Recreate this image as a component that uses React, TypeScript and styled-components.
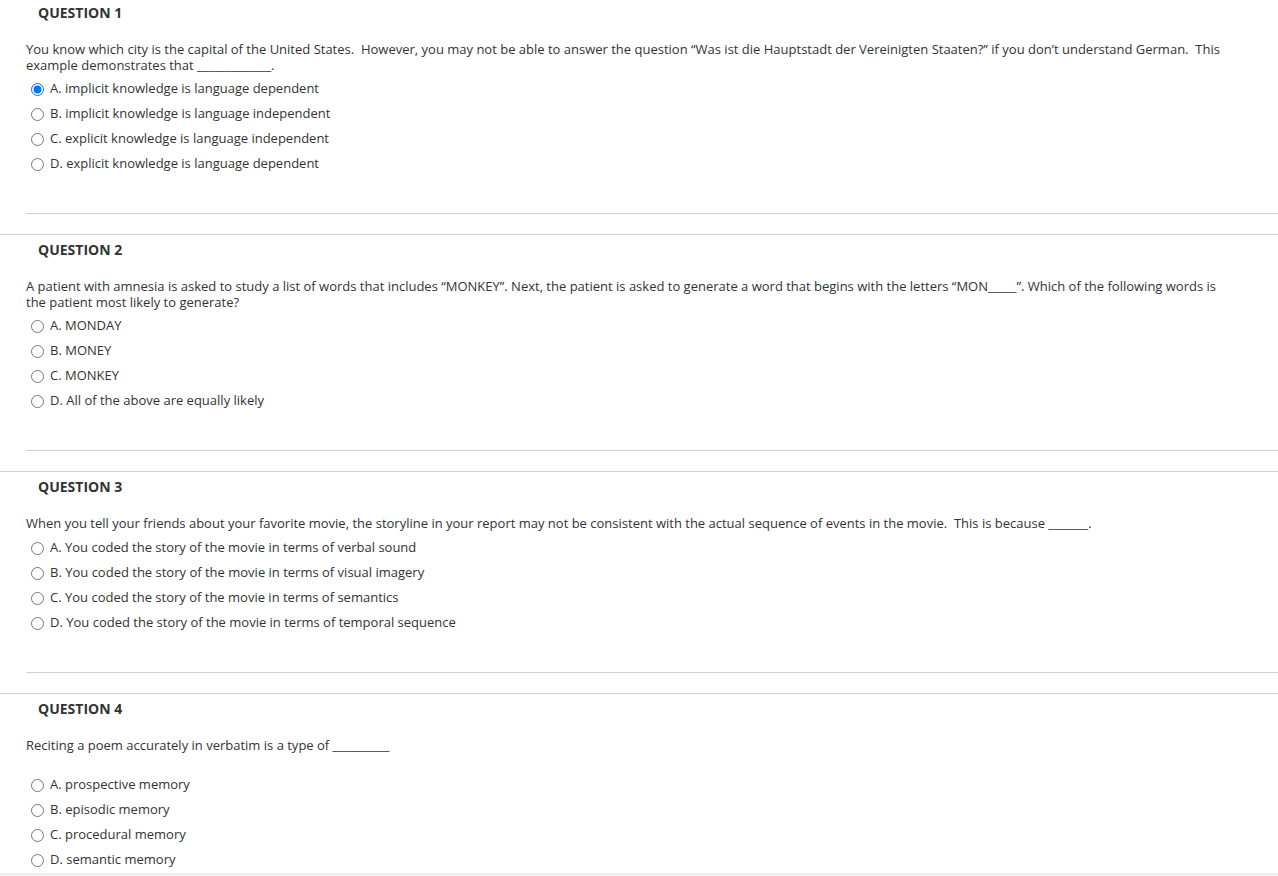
import React from "react";
import styled, { createGlobalStyle } from "styled-components";

const GlobalStyle = createGlobalStyle`
  html, body {
    margin: 0;
    padding: 0;
    background: #ffffff;
  }
  body {
    font-family: "Open Sans", "DejaVu Sans", sans-serif;
    color: #333333;
    -webkit-font-smoothing: antialiased;
  }
`;

const Page = styled.div`
  width: 1278px;
  min-height: 876px;
  display: flex;
  flex-direction: column;
`;

const Section = styled.section<{ $first?: boolean }>`
  border-top: ${(p) => (p.$first ? "none" : "1px solid #d0d0d0")};
  padding-top: ${(p) => (p.$first ? "5px" : "7px")};
  margin-top: ${(p) => (p.$first ? "0" : "20px")};
`;

const Header = styled.h3`
  margin: 0;
  padding-left: 38px;
  font-size: 14px;
  line-height: 16px;
  font-weight: 700;
  color: #333333;
  letter-spacing: 0;
`;

const Body = styled.div<{ $last?: boolean }>`
  margin-left: 26px;
  margin-top: 20px;
  padding-bottom: ${(p) => (p.$last ? "0" : "37px")};
  border-bottom: ${(p) => (p.$last ? "none" : "1px solid #d0d0d0")};
`;

const Prompt = styled.p<{ $gapAfter?: number }>`
  margin: 0;
  padding: 0 50px ${(p) => p.$gapAfter ?? 0}px 0;
  font-size: 13px;
  line-height: 16px;
  color: #333333;
`;

const Options = styled.div`
  padding-top: 3px;
  display: flex;
  flex-direction: column;
`;

const OptionRow = styled.label`
  display: flex;
  align-items: center;
  height: 25px;
  padding-left: 5px;
  font-size: 13px;
  line-height: 25px;
  color: #333333;
`;

const Radio = styled.input`
  width: 13px;
  height: 13px;
  margin: 1px 6px 0 0;
  flex: none;
`;

const Footer = styled.div`
  margin-top: auto;
  height: 3px;
  background: linear-gradient(#ececec, #f3f3f3);
`;

type Q = {
  title: string;
  prompt: string;
  gapAfter?: number;
  options: string[];
  selected?: number;
};

const questions: Q[] = [
  {
    title: "QUESTION 1",
    prompt:
      "You know which city is the capital of the United States.\u00a0 However, you may not be able to answer the question \u201cWas ist die Hauptstadt der Vereinigten Staaten?\u201d if you don\u2019t understand German.\u00a0 This example demonstrates that _____________.",
    options: [
      "A. implicit knowledge is language dependent",
      "B. implicit knowledge is language independent",
      "C. explicit knowledge is language independent",
      "D. explicit knowledge is language dependent",
    ],
    selected: 0,
  },
  {
    title: "QUESTION 2",
    prompt:
      "A patient with amnesia is asked to study a list of words that includes \u201cMONKEY\u201d. Next, the patient is asked to generate a word that begins with the letters \u201cMON_____\u201d. Which of the following words is the patient most likely to generate?",
    options: [
      "A. MONDAY",
      "B. MONEY",
      "C. MONKEY",
      "D. All of the above are equally likely",
    ],
  },
  {
    title: "QUESTION 3",
    prompt:
      "When you tell your friends about your favorite movie, the storyline in your report may not be consistent with the actual sequence of events in the movie.\u00a0 This is because _______.",
    gapAfter: 1,
    options: [
      "A. You coded the story of the movie in terms of verbal sound",
      "B. You coded the story of the movie in terms of visual imagery",
      "C. You coded the story of the movie in terms of semantics",
      "D. You coded the story of the movie in terms of temporal sequence",
    ],
  },
  {
    title: "QUESTION 4",
    prompt: "Reciting a poem accurately in verbatim is a type of __________",
    gapAfter: 16,
    options: [
      "A. prospective memory",
      "B. episodic memory",
      "C. procedural memory",
      "D. semantic memory",
    ],
  },
];

export default function App() {
  return (
    <Page>
      <GlobalStyle />
      {questions.map((q, qi) => (
        <Section key={q.title} $first={qi === 0}>
          <Header>{q.title}</Header>
          <Body $last={qi === questions.length - 1}>
            <Prompt $gapAfter={q.gapAfter}>{q.prompt}</Prompt>
            <Options>
              {q.options.map((o, oi) => (
                <OptionRow key={o}>
                  <Radio
                    type="radio"
                    name={`q${qi}`}
                    defaultChecked={q.selected === oi}
                  />
                  {o}
                </OptionRow>
              ))}
            </Options>
          </Body>
        </Section>
      ))}
      <Footer />
    </Page>
  );
}
